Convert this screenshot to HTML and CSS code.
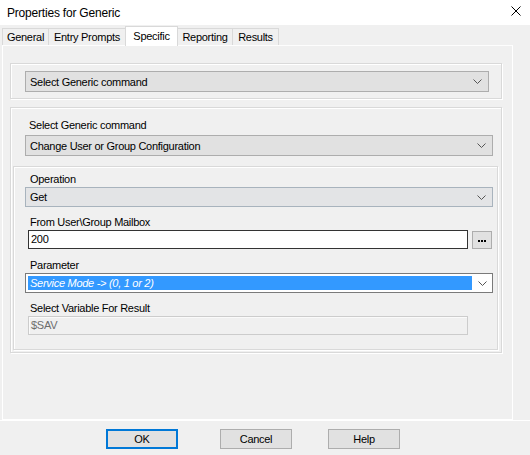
FILE: index.html
```html
<!DOCTYPE html>
<html>
<head>
<meta charset="utf-8">
<title>Properties for Generic</title>
<link rel="stylesheet" href="styles.css">
</head>
<body>
<div class="window">
  <div class="titlebar">
    <span class="title">Properties for Generic</span>
    <svg class="close" width="10" height="10" viewBox="0 0 10 10"><path d="M0.5 0.5 L9.5 9.5 M9.5 0.5 L0.5 9.5" stroke="#000" stroke-width="1" fill="none"/></svg>
  </div>
  <div class="tabs">
    <div class="tab t-general">General</div>
    <div class="tab t-entry">Entry Prompts</div>
    <div class="tab t-specific selected">Specific</div>
    <div class="tab t-reporting">Reporting</div>
    <div class="tab t-results">Results</div>
  </div>
  <div class="page">
    <div class="group g1">
      <div class="combo c1"><span class="ctext">Select Generic command</span><svg class="chev" width="9" height="5" viewBox="0 0 9 5"><polyline points="0.5,0.5 4.5,4.5 8.5,0.5" fill="none" stroke="#555" stroke-width="1"/></svg></div>
    </div>
    <div class="group g2">
      <div class="label l-first">Select Generic command</div>
      <div class="combo c2"><span class="ctext">Change User or Group Configuration</span><svg class="chev" width="9" height="5" viewBox="0 0 9 5"><polyline points="0.5,0.5 4.5,4.5 8.5,0.5" fill="none" stroke="#555" stroke-width="1"/></svg></div>
      <div class="group g3">
        <div class="label l-op">Operation</div>
        <div class="combo c3 hover"><span class="ctext">Get</span><svg class="chev" width="9" height="5" viewBox="0 0 9 5"><polyline points="0.5,0.5 4.5,4.5 8.5,0.5" fill="none" stroke="#555" stroke-width="1"/></svg></div>
        <div class="label l-gap">From User\Group Mailbox</div>
        <div class="row">
          <div class="textbox focused">200</div>
          <div class="ellipsis"><span class="dot"></span><span class="dot"></span><span class="dot"></span></div>
        </div>
        <div class="label l-gap2">Parameter</div>
        <div class="combo c3 active"><span class="sel">Service Mode -&gt; (0, 1 or 2)</span><span class="drop"><svg class="chev" width="9" height="5" viewBox="0 0 9 5"><polyline points="0.5,0.5 4.5,4.5 8.5,0.5" fill="none" stroke="#555" stroke-width="1"/></svg></span></div>
        <div class="label l-gap">Select Variable For Result</div>
        <div class="textbox disabled">$SAV</div>
      </div>
    </div>
  </div>
  <div class="footer">
    <button class="btn default">OK</button>
    <button class="btn cancel">Cancel</button>
    <button class="btn help">Help</button>
  </div>
</div>
</body>
</html>
```
FILE: styles.css
```css
html, body {
  margin: 0;
  padding: 0;
}
body {
  background: #f0f0f0;
  font-family: "Liberation Sans", Arial, sans-serif;
  font-size: 11px;
  letter-spacing: -0.28px;
  color: #000;
}
.window {
  width: 530px;
  height: 455px;
  overflow: hidden;
}
.titlebar {
  height: 25px;
  background: #fff;
  display: flex;
  align-items: center;
  padding-left: 7px;
}
.title {
  font-size: 12px;
  letter-spacing: -0.2px;
  flex: 1;
}
.close {
  margin-right: 9px;
  margin-top: -4px;
}
.tabs {
  height: 20px;
  display: flex;
  align-items: flex-end;
  padding-left: 2px;
  position: relative;
  z-index: 1;
}
.tab {
  height: 17px;
  box-sizing: border-box;
  border: 1px solid #d9d9d9;
  border-bottom: none;
  margin-right: -1px;
  background: #f0f0f0;
  text-align: center;
  line-height: 16px;
  white-space: nowrap;
}
.tab.selected {
  height: 20px;
  margin-bottom: -1px;
  background: #fff;
  line-height: 18px;
  border-color: #d9d9d9;
}
.t-general { width: 47px; }
.t-entry { width: 78px; }
.t-specific { width: 53px; }
.t-reporting { width: 56px; }
.t-results { width: 47px; }

.page {
  margin-left: 2px;
  width: 511px;
  height: 375px;
  box-sizing: border-box;
  border: 1px solid #fff;
  border-top-color: #fdfdfd;
  padding-top: 17px;
}
.group {
  box-sizing: border-box;
  border: 1px solid #d9d9d9;
  box-shadow: inset 1px 1px 0 #fff, 1px 1px 0 #fff;
}
.g1 {
  margin-left: 7px;
  width: 492px;
  height: 36px;
  padding-top: 7px;
}
.g2 {
  margin-left: 7px;
  margin-top: 8px;
  width: 492px;
  height: 246px;
  padding-top: 10px;
}
.g3 {
  margin-left: 2px;
  margin-top: 10px;
  width: 485px;
  height: 184px;
  padding-top: 5px;
}
.label {
  height: 14px;
  line-height: 14px;
  margin-left: 16px;
  white-space: nowrap;
}
.l-first { margin-left: 18px; }
.l-gap { margin-top: 8px; }
.l-gap2 { margin-top: 9px; }

.combo {
  box-sizing: border-box;
  display: flex;
  align-items: center;
  background: #e1e1e1;
  border: 1px solid #adadad;
  padding-left: 4px;
  white-space: nowrap;
}
.ctext { flex: 1; }
.chev { margin-right: 6px; flex: none; }
.c1 {
  margin-left: 14px;
  width: 464px;
  height: 21px;
}
.c2 {
  margin-left: 14px;
  margin-top: 3px;
  width: 468px;
  height: 21px;
}
.c3 {
  margin-left: 11px;
  margin-top: 1px;
  width: 468px;
  height: 20px;
}
.combo.hover {
  border-color: #a8b3bd;
  background: #e3e4e6;
}
.combo.active {
  background: #fff;
  border-color: #7a7a7a;
  padding: 2px 0 2px 2px;
  align-items: stretch;
}
.sel {
  flex: 1;
  background: #3399ff;
  color: #fff;
  font-style: italic;
  padding-left: 2px;
  line-height: 14px;
}
.drop {
  width: 20px;
  display: flex;
  align-items: center;
  justify-content: center;
}
.drop .chev { margin: 0 0 0 1px; }

.row {
  display: flex;
  align-items: flex-start;
  margin-top: 1px;
}
.textbox {
  box-sizing: border-box;
  margin-left: 14px;
  width: 440px;
  height: 19px;
  line-height: 17px;
  padding-left: 2px;
  background: #fff;
  border: 1px solid #333;
}
.textbox.disabled {
  margin-top: 1px;
  background: #f0f0f0;
  border-color: #cccccc;
  box-shadow: inset 1px 1px 0 #fafafa;
  color: #6d6d6d;
}
.ellipsis {
  box-sizing: border-box;
  margin-left: 4px;
  margin-top: 1px;
  width: 20px;
  height: 18px;
  background: #e1e1e1;
  border: 1px solid #adadad;
  display: flex;
  align-items: center;
  justify-content: center;
  gap: 1px;
  padding-top: 1px;
}
.dot {
  width: 2px;
  height: 2px;
  background: #000;
}

.footer {
  border-top: 1px solid #fff;
  padding-top: 8px;
  display: flex;
}
.btn {
  box-sizing: border-box;
  width: 72px;
  height: 20px;
  background: #e1e1e1;
  border: 1px solid #adadad;
  font-family: inherit;
  font-size: 11px;
  letter-spacing: -0.28px;
  padding: 0;
  color: #000;
}
.btn.default {
  margin-left: 106px;
  border: 2px solid #0078d7;
}
.btn.cancel { margin-left: 42px; }
.btn.help { margin-left: 36px; }
```
